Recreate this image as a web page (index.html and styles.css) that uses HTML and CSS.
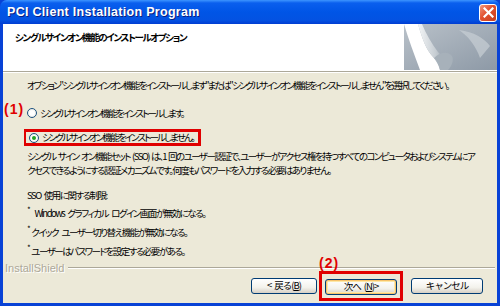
FILE: index.html
```html
<!DOCTYPE html>
<html lang="ja">
<head>
  <meta charset="utf-8">
  <title>PCI Client Installation Program</title>
  <link rel="stylesheet" href="styles.css">
</head>
<body>

  <div class="window">
    <div class="titlebar">
      <span class="title">PCI Client Installation Program</span>
      <span class="close">
        <svg width="11" height="11" viewBox="0 0 11 11"><path d="M1.5 1.5l8 8M9.5 1.5l-8 8" stroke="#fff" stroke-width="2.2" stroke-linecap="square"/></svg>
      </span>
    </div>

    <div class="frame">
      <div class="header">
        <div class="header-title">シングルサインオン機能のインストールオプション</div>
        <svg class="header-art" width="93" height="46" viewBox="0 0 93 46">
          <defs>
            <linearGradient id="bg" x1="0" y1="0" x2="1" y2="1">
              <stop offset="0" stop-color="#b9c1c9"/>
              <stop offset="1" stop-color="#8d99a6"/>
            </linearGradient>
            <linearGradient id="curl" x1="0" y1="0" x2="1" y2="0">
              <stop offset="0" stop-color="#f4f6f7"/>
              <stop offset="0.6" stop-color="#c5ccd2"/>
              <stop offset="1" stop-color="#8e9aa5"/>
            </linearGradient>
          </defs>
          <rect width="93" height="46" fill="url(#bg)"/>
          <path d="M0 0 H14 C18 14 22 26 30 34 C33 38 35 42 36 46 H16 C10 30 4 14 0 0 Z" fill="#fff"/>
          <path d="M14 0 C18 14 22 26 30 34 C34 38 36 42 36 46 H44 C42 38 38 32 34 28 C28 20 22 10 18 0 Z" fill="url(#curl)"/>
          <path d="M30 34 C36 28 44 27 48 32 C50 36 48 42 44 46 H36 C36 42 34 38 30 34 Z" fill="#a7b1ba"/>
          <path d="M55 6 C64 12 72 22 76 34 L86 22 C80 14 70 8 55 6 Z" fill="#c8ced4" opacity="0.7"/>
        </svg>
      </div>

      <div class="content">
        <p class="intro">オプション"シングルサインオン機能をインストールします"または"シングルサインオン機能をインストールしません"を選択してください。</p>

        <div class="options">
          <div class="option">
            <span class="mark">(1)</span>
            <span class="radio"></span>
            <span>シングルサインオン機能をインストールします。</span>
          </div>
          <div class="option option-picked">
            <span class="radio radio-on"></span>
            <span>シングルサインオン機能をインストールしません。</span>
          </div>
        </div>

        <p class="desc">シングル サイン オン機能セット (SSO) は、1 回のユーザー認証で、ユーザーがアクセス権を持つすべてのコンピュータおよびシステムにア<br>クセスできるようにする認証メカニズムです。何度もパスワードを入力する必要はありません。</p>

        <p class="limits-title">SSO 使用に関する制限:</p>
        <ul class="limits">
          <li><span class="star">*</span> Windows グラフィカル ログイン画面が無効になる。</li>
          <li><span class="star">*</span>クイック ユーザー切り替え機能が無効になる。</li>
          <li><span class="star">*</span>ユーザーはパスワードを設定する必要がある。</li>
        </ul>
      </div>

      <div class="brand">
        <span class="brand-name">InstallShield</span>
        <span class="brand-rule"></span>
      </div>

      <div class="buttons">
        <button class="btn">&lt; 戻る(<u>B</u>)</button>
        <div class="btn-mark">
          <span class="mark mark-next">(2)</span>
          <button class="btn btn-default">次へ (<u>N</u>)&gt;</button>
        </div>
        <button class="btn btn-cancel">キャンセル</button>
      </div>
    </div>
  </div>

</body>
</html>
```

FILE: styles.css
```css
* {
  padding: 0;
  margin: 0;
  box-sizing: border-box;
}

body {
  background: #fff;
  font-family: "Noto Sans CJK JP", sans-serif;
  font-size: 11px;
  color: #000;
}

.window {
  width: 500px;
  height: 306px;
  display: flex;
  flex-direction: column;
  background: #0842d6;
}

.titlebar {
  height: 24px;
  flex-shrink: 0;
  display: flex;
  align-items: center;
  justify-content: space-between;
  padding: 0 3px 0 7px;
  border-radius: 7px 7px 0 0;
  background: linear-gradient(#3d95ff 0, #0a5fee 3px, #0055e6 12px, #0352e2 20px, #003dd2 24px);
}

.title {
  font-family: "Liberation Sans", sans-serif;
  font-weight: bold;
  font-size: 12.5px;
  color: #fff;
  letter-spacing: 0.3px;
  text-shadow: 1px 1px #0a1f80;
}

.close {
  width: 18px;
  height: 18px;
  margin-top: 1px;
  display: flex;
  align-items: center;
  justify-content: center;
  border: 1px solid #fff;
  border-radius: 3px;
  background: linear-gradient(135deg, #f09a80, #e2512f 45%, #c63d1c);
}

.frame {
  flex: 1;
  min-height: 0;
  display: flex;
  flex-direction: column;
  margin: 0 3px 3px;
  background: #ece9d8;
  font-feature-settings: "palt";
}

.header {
  height: 48px;
  flex-shrink: 0;
  display: flex;
  justify-content: space-between;
  background: #fff;
  border-bottom: 1px solid #aca899;
  box-shadow: 0 1px 0 #fff;
}

.header-title {
  font-weight: bold;
  font-size: 9.5px;
  letter-spacing: -1.4px;
  padding: 6px 0 0 12px;
}

.header-art {
  display: block;
}

.content {
  flex: 1;
  padding: 6px 0 0 24px;
  font-size: 9.5px;
  letter-spacing: -1.5px;
  word-spacing: 2.5px;
  line-height: 15px;
}

.intro {
  white-space: nowrap;
  letter-spacing: -1.85px;
  margin-bottom: 12px;
}

.options {
  display: flex;
  flex-direction: column;
  align-items: flex-start;
  gap: 8px;
  letter-spacing: -1.9px;
}

.option {
  position: relative;
  display: flex;
  align-items: center;
  gap: 3px;
  height: 16px;
  white-space: nowrap;
}

.option-picked {
  margin-left: -3px;
  padding: 0 4px 0 3px;
  height: 17px;
  border: 3px solid #e00000;
  border-left-width: 2px;
}

.mark {
  position: absolute;
  left: -23px;
  top: -3px;
  font-family: "Liberation Sans", sans-serif;
  font-weight: bold;
  font-size: 14px;
  letter-spacing: 1px;
  color: #e00000;
}

.radio {
  width: 10px;
  height: 10px;
  border-radius: 50%;
  border: 1px solid #1c5180;
  background: radial-gradient(#fff 40%, #dcdad0);
  display: flex;
  align-items: center;
  justify-content: center;
}

.radio-on::after {
  content: "";
  width: 4px;
  height: 4px;
  border-radius: 50%;
  background: #21a121;
}

.desc {
  margin-top: 3px;
  line-height: 14px;
  letter-spacing: -1.55px;
  word-spacing: 1.5px;
  white-space: nowrap;
}

.limits-title {
  margin-top: 11px;
}

.limits {
  list-style: none;
  margin-top: 3px;
  display: flex;
  flex-direction: column;
  gap: 4px;
}

.star {
  font-size: 8px;
  line-height: 1;
  vertical-align: top;
  margin-right: 2px;
}

.brand {
  height: 6px;
  flex-shrink: 0;
  display: flex;
  align-items: center;
  gap: 4px;
  padding: 0 2px;
}

.brand-name {
  font-family: "Liberation Sans", sans-serif;
  font-size: 11px;
  color: #aca899;
  text-shadow: 1px 1px #fff;
}

.brand-rule {
  flex: 1;
  height: 2px;
  border-top: 1px solid #aca899;
  border-bottom: 1px solid #fff;
}

.buttons {
  flex-shrink: 0;
  display: flex;
  align-items: center;
  padding: 0 0 2px 248px;
}

.btn {
  width: 66px;
  height: 16px;
  font-family: "Noto Sans CJK JP", sans-serif;
  font-size: 9.5px;
  letter-spacing: -1px;
  word-spacing: 2px;
  line-height: 1;
  border: 1px solid #003c74;
  border-radius: 3px;
  background: linear-gradient(#fff, #f3f2ec 60%, #d6d0c5);
  color: #000;
}

.btn-mark {
  position: relative;
  margin-left: 2px;
  padding: 3px;
  border: 3px solid #e00000;
}

.btn-default {
  width: 72px;
  box-shadow: inset 0 0 0 1px #f7c36b, inset 0 0 0 2px #fde9a9;
}

.mark-next {
  left: -3px;
  top: -19px;
}

.btn-cancel {
  width: 72px;
  margin-left: 8px;
}
```
